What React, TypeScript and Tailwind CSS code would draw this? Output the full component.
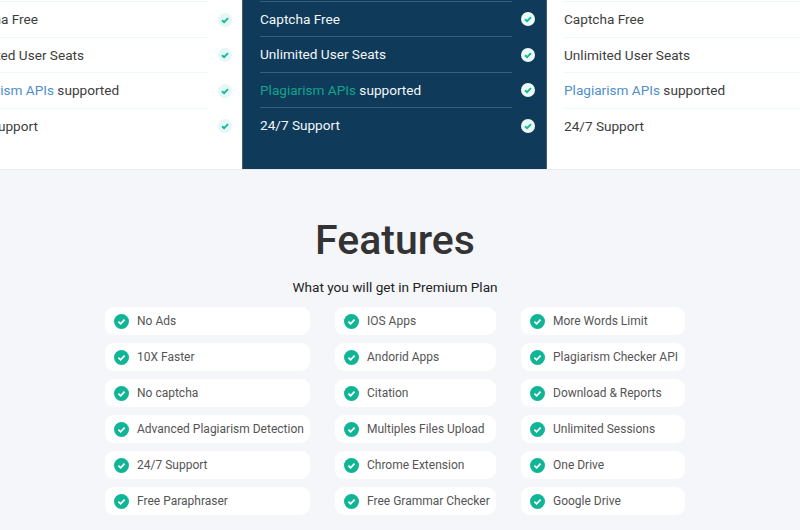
const planRows = ["Captcha Free", "Unlimited User Seats", "Plagiarism APIs supported", "24/7 Support"];

const featureColumns = [
  ["No Ads", "10X Faster", "No captcha", "Advanced Plagiarism Detection", "24/7 Support", "Free Paraphraser"],
  ["IOS Apps", "Andorid Apps", "Citation", "Multiples Files Upload", "Chrome Extension", "Free Grammar Checker"],
  ["More Words Limit", "Plagiarism Checker API", "Download & Reports", "Unlimited Sessions", "One Drive", "Google Drive"],
];

const columnWidths = ["w-[205px]", "w-[161px]", "w-[164px]"];

function SmallCheck({ variant }: { variant: "soft" | "white" }) {
  return (
    <span
      className={
        variant === "white"
          ? "flex h-[14px] w-[14px] items-center justify-center rounded-full bg-[#ecfbf8]"
          : "flex h-[14px] w-[14px] items-center justify-center rounded-full bg-[#e6f8f5]"
      }
    >
      <svg viewBox="0 0 14 14" className="h-[14px] w-[14px]" fill="none">
        <path d="M4 7.2 6.1 9.2 10 5.2" stroke="#10b99a" strokeWidth="1.9" />
      </svg>
    </span>
  );
}

function PlanColumn({ dark, className }: { dark?: boolean; className: string }) {
  return (
    <div
      className={
        dark
          ? `h-[169px] w-[305px] shrink-0 border-x border-[#3d5f7c] bg-[#0f3a5a] pt-[0.5px] text-[#f4f7f9] ${className}`
          : `h-[169px] w-[304px] shrink-0 bg-white pt-[1.2px] text-[#3d3d3d] ${className}`
      }
    >
      {planRows.map((row) => (
        <div key={row} className="flex h-[35.5px] items-center">
          <div
            className={
              dark
                ? "flex h-[35.5px] w-[252px] items-center border-t border-[#3a5f7d] text-[13.6px]"
                : "flex h-[35.5px] w-[250px] items-center border-t border-[#eefafa] text-[13.6px]"
            }
          >
            {row.startsWith("Plagiarism") ? (
              <span>
                <span className={dark ? "text-[#10a48c]" : "text-[#4f8fc9]"}>Plagiarism APIs</span> supported
              </span>
            ) : (
              row
            )}
          </div>
          <div className={dark ? "mt-[2px] ml-[9px]" : "mt-[2px] ml-[10px]"}>
            <SmallCheck variant={dark ? "white" : "soft"} />
          </div>
        </div>
      ))}
    </div>
  );
}

function FeatureItem({ label }: { label: string }) {
  return (
    <div className="flex h-[28px] items-center gap-2 rounded-[9px] bg-white pl-[9px] text-[12px] whitespace-nowrap text-[#555555]">
      <svg viewBox="0 0 15 15" className="h-[15px] w-[15px] shrink-0">
        <circle cx="7.5" cy="7.5" r="7.5" fill="#10b595" />
        <path d="M4.4 7.7 6.6 9.8 10.6 5.6" fill="none" stroke="#ffffff" strokeWidth="1.8" />
      </svg>
      <span>{label}</span>
    </div>
  );
}

export default function App() {
  return (
    <div className="h-[530px] w-[800px] overflow-hidden bg-[#f5f6f9] font-['Roboto',sans-serif]">
      <div className="ml-[-62px] flex border-b border-[#ebecf2]">
        <PlanColumn className="pl-[20px]" />
        <PlanColumn dark className="pl-[17px]" />
        <PlanColumn className="pl-[17px]" />
      </div>

      <div className="pr-[10px] text-center">
        <h2 className="mt-[40px] text-[41px] leading-[60px] font-medium text-[#333333]">Features</h2>
        <p className="mt-[7px] text-[13.6px] leading-[20px] text-[#222222]">What you will get in Premium Plan</p>
      </div>

      <div className="mt-[10px] ml-[105px] flex gap-[25px]">
        {featureColumns.map((col, index) => (
          <div key={index} className={`flex flex-col gap-2 ${columnWidths[index]}`}>
            {col.map((label) => (
              <FeatureItem key={label} label={label} />
            ))}
          </div>
        ))}
      </div>
    </div>
  );
}
